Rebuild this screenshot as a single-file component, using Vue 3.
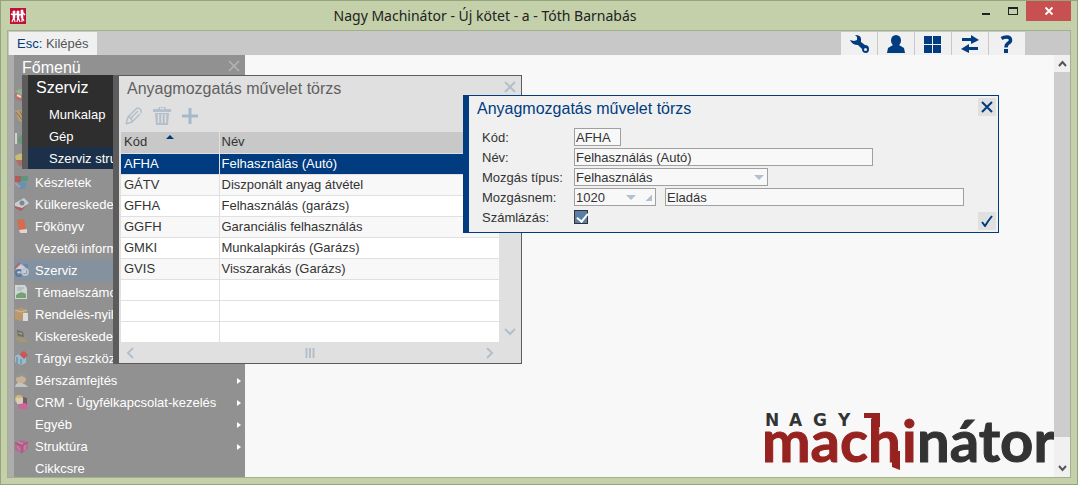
<template>
  <div class="app-window">
    <header class="titlebar">
      <svg class="app-icon" viewBox="0 0 16 16">
        <rect width="16" height="16" fill="#c01038" />
        <path d="M1 6l3 1 3-1 3 1 3-2 2 2" fill="none" stroke="#fff" stroke-width="1.500" />
        <path d="M4 5v5M8 5v5M12 4v6" stroke="#fff" stroke-width="2.500" />
        <path d="m4 9-2 5M4 9l1 5M8 9l-1 5M8 9l2 5M12 9v5M12 9l2 4" stroke="#fff" stroke-width="1.200" />
        <circle cx="4" cy="4" r="1.500" fill="#fff" />
        <circle cx="8" cy="4" r="1.500" fill="#fff" />
        <circle cx="12" cy="3" r="1.500" fill="#fff" />
      </svg>
      <h1 class="window-title">Nagy Machinátor - Új kötet - a - Tóth Barnabás</h1>
      <div class="window-controls">
        <button class="win-btn" aria-label="Kis méret">
          <svg width="10" height="12" viewBox="0 0 10 12"><path d="M1 8h8v2H1z" fill="#222" /></svg>
        </button>
        <button class="win-btn" aria-label="Teljes méret">
          <svg width="10" height="10" viewBox="0 0 10 10"><path d="M0 1h10v8H0zM1 3v5h8V3z" fill="#222" fill-rule="evenodd" /></svg>
        </button>
        <button class="win-btn win-close" aria-label="Bezárás">
          <svg width="10" height="10" viewBox="0 0 10 10"><path d="m1.500 1.500 7 7m0-7-7 7" stroke="#fff" stroke-width="1.800" /></svg>
        </button>
      </div>
    </header>

    <div class="client">
      <nav class="menubar">
        <button class="esc-btn"><span class="esc-key">Esc:</span> Kilépés</button>
        <div class="tools">
          <button v-for="tool in tools" :key="tool.name" class="tool-btn" :aria-label="tool.name">
            <svg width="22" height="20" viewBox="0 0 22 20" v-html="tool.svg"></svg>
          </button>
        </div>
      </nav>

      <main class="desktop">
        <!-- Főmenü -->
        <section class="main-menu">
          <div class="menu-head">
            <h2>Főmenü</h2>
            <button class="plain-btn" aria-label="Főmenü bezárása">
              <svg width="12" height="12" viewBox="0 0 12 12"><path d="m1 1 10 10m0-10L1 11" stroke="#b4b4b4" stroke-width="1.600" /></svg>
            </button>
          </div>
          <ul>
            <li v-for="(item, i) in menuItems" :key="i" :class="{ active: item.active }">
              <svg class="menu-icon" viewBox="0 0 15 16" v-html="item.icon"></svg>
              <span class="menu-label">{{ item.label }}</span>
              <span v-if="item.arrow" class="menu-arrow"></span>
            </li>
          </ul>
        </section>

        <!-- Szerviz almenü -->
        <section class="sub-menu">
          <h2>Szerviz</h2>
          <ul>
            <li>Munkalap</li>
            <li>Gép</li>
            <li class="active">Szerviz struktúra</li>
          </ul>
        </section>

        <!-- lista ablak -->
        <section class="list-window">
          <div class="list-head">
            <h2>Anyagmozgatás művelet törzs</h2>
            <button class="plain-btn" aria-label="Lista bezárása">
              <svg width="12" height="12" viewBox="0 0 12 12"><path d="m1 1 10 10m0-10L1 11" stroke="#b3bfca" stroke-width="2" /></svg>
            </button>
          </div>
          <div class="list-tools">
            <button class="plain-btn" aria-label="Módosítás">
              <svg width="20" height="20" viewBox="0 0 20 20"><path d="M2 18 4 11 13 2M7 17l9-9M2 18l6-2M6 13l8-8M4 11q4 0 4 5M13 2q5 0 4 5" fill="none" stroke="#b3bfca" stroke-width="1.500" /></svg>
            </button>
            <button class="plain-btn" aria-label="Törlés">
              <svg width="20" height="20" viewBox="0 0 20 20"><path d="M1 3h5l1-2h6l1 2h5v3H1zM3 7h14l-1 12H4z" fill="#b3bfca" /><path d="M8 2.500h4M6.500 8v9M10 8v9M13.500 8v9" stroke="#e0e0e0" stroke-width="1.500" /></svg>
            </button>
            <button class="plain-btn" aria-label="Új">
              <svg width="20" height="20" viewBox="0 0 20 20"><path d="M10 2v16M2 10h16" stroke="#a6b9cc" stroke-width="3" /></svg>
            </button>
          </div>
          <div class="list-body">
            <table>
              <thead>
                <tr>
                  <th class="col-code">Kód <span class="sort-mark"></span></th>
                  <th>Név</th>
                </tr>
              </thead>
              <tbody>
                <tr
                  v-for="(row, i) in rows"
                  :key="i"
                  :class="{ selected: i === selected, filled: row.code }"
                  @click="selected = i"
                >
                  <td>{{ row.code }}</td>
                  <td>{{ row.name }}</td>
                </tr>
              </tbody>
            </table>
            <div class="list-vscroll">
              <svg width="12" height="8" viewBox="0 0 12 8"><path d="m1 1 5 5 5-5" fill="none" stroke="#b3bfca" stroke-width="2" /></svg>
            </div>
          </div>
          <div class="list-hscroll">
            <svg width="8" height="12" viewBox="0 0 8 12"><path d="M7 1 2 6l5 5" fill="none" stroke="#b3bfca" stroke-width="2" /></svg>
            <svg width="10" height="10" viewBox="0 0 10 10"><path d="M1.500 0v10M5 0v10M8.500 0v10" stroke="#b3bfca" stroke-width="2" /></svg>
            <svg width="8" height="12" viewBox="0 0 8 12"><path d="m1 1 5 5-5 5" fill="none" stroke="#b3bfca" stroke-width="2" /></svg>
          </div>
        </section>

        <!-- adatlap -->
        <form class="dialog" @submit.prevent>
          <div class="dialog-main">
            <h2>Anyagmozgatás művelet törzs</h2>
            <div class="fields">
              <label for="code">Kód:</label>
              <div class="field"><input id="code" v-model="form.code" class="box w-code" type="text" /></div>
              <label for="name">Név:</label>
              <div class="field"><input id="name" v-model="form.name" class="box w-long" type="text" /></div>
              <label for="type">Mozgás típus:</label>
              <div class="field">
                <div class="box combo w-type">
                  <select id="type" v-model="form.type">
                    <option>Felhasználás</option>
                  </select>
                  <span class="down"></span>
                </div>
              </div>
              <label for="kind">Mozgásnem:</label>
              <div class="field">
                <div class="box combo w-kind">
                  <input id="kind" v-model="form.kind" type="text" />
                  <button type="button" class="down" aria-label="Lista"></button>
                  <button type="button" class="corner" aria-label="Keresés"></button>
                </div>
                <input v-model="form.kindName" class="box w-long" type="text" aria-label="Mozgásnem neve" />
              </div>
              <label for="bill">Számlázás:</label>
              <div class="field"><input id="bill" v-model="form.bill" class="tick" type="checkbox" /></div>
            </div>
          </div>
          <div class="dialog-side">
            <button type="button" class="dlg-btn" aria-label="Bezárás">
              <svg width="12" height="12" viewBox="0 0 12 12"><path d="m1 1 10 10m0-10L1 11" stroke="#003c7f" stroke-width="2" /></svg>
            </button>
            <button type="submit" class="dlg-btn" aria-label="Rendben">
              <svg width="12" height="12" viewBox="0 0 12 12"><path d="m1 7 3 4q3-5 7-10" fill="none" stroke="#003c7f" stroke-width="2" /></svg>
            </button>
          </div>
        </form>

        <svg class="logo" width="289" height="66" viewBox="0 0 289 66">
          <g class="logo-small">
            <text x="0" y="21">N</text>
            <text x="24" y="21">A</text>
            <text x="48" y="21">G</text>
            <text x="73" y="21">Y</text>
          </g>
          <g class="logo-big">
            <text x="-3" y="57" class="red">mac</text>
            <text x="103" y="57" class="red">h</text>
            <text x="137" y="57" class="red">i</text>
            <text x="152" y="57">nátor</text>
          </g>
          <path d="M99 8h16v14h-8v-9h-8zM127 46h8v19l-8-3z" fill="#96231f" />
        </svg>

        <div class="scrollbar">
          <button class="plain-btn" aria-label="Fel">
            <svg width="9" height="7" viewBox="0 0 9 7"><path d="m1 6 3.500-4L8 6" fill="none" stroke="#555" stroke-width="2" /></svg>
          </button>
          <div class="track"><div class="thumb"></div></div>
          <button class="plain-btn" aria-label="Le">
            <svg width="9" height="7" viewBox="0 0 9 7"><path d="m1 1 3.500 4L8 1" fill="none" stroke="#555" stroke-width="2" /></svg>
          </button>
        </div>
      </main>
    </div>
  </div>
</template>

<script setup>
import { reactive, ref } from 'vue'

const tools = [
  { name: 'Beállítások', svg: '<path d="M2 6l4 1 3-1V3L7 1q6 0 6 4v3l4 3q4 0 4 4t-3 4q-4 0-4-4l-4-4q-6 0-8-5z" fill="#003c7f"/><circle cx="17.500" cy="15.500" r="1.500" fill="#f0f0f0"/>' },
  { name: 'Felhasználó', svg: '<ellipse cx="11" cy="6.500" rx="5" ry="5.500" fill="#003c7f"/><path d="M8 11h6l5 3 1 5H2l1-5z" fill="#003c7f"/>' },
  { name: 'Ablakok', svg: '<path d="M2 2h8v8H2zM11 2h8v8h-8zM2 11h8v8H2zM11 11h8v8h-8z" fill="#003c7f"/>' },
  { name: 'Váltás', svg: '<path d="M3 4h9V1l8 5-8 4V7H3zM19 13h-9v-3l-8 5 8 4v-3h9z" fill="#003c7f"/>' },
  { name: 'Súgó', svg: '<path d="M5.500 4.500Q8 3 10.500 3q4 0 4 3 0 2-2 3-2.500 1.500-2.500 4.500" fill="none" stroke="#003c7f" stroke-width="3.500"/><path d="M8 15h4v4H8z" fill="#003c7f"/>' }
]

const icons = {
  berry: '<circle cx="7" cy="9" r="6" fill="#c06a58"/><path d="M1 6q5-6 11 0L7 9z" fill="#8fb98a"/><path d="M3 9l4 2" stroke="#eee" stroke-width="2"/>',
  shell: '<path d="M1 3q9-3 11 4l-1 7-6-1z" fill="#c9a268"/><path d="M2 4l7 9M6 3l4 9" stroke="#7d6a55"/>',
  plant: '<path d="M2 3v11" stroke="#e0e0e0" stroke-width="2"/><circle cx="9" cy="10" r="5" fill="#5f9a78"/>',
  food: '<path d="M1 4q6-5 12 0l-1 4H2z" fill="#d8c96c"/><path d="M2 8h10l-2 6H5z" fill="#b6655e"/>',
  stock: '<path d="M1 2h6v6H1z" fill="#bc5050"/><path d="M7 2h7v5H7z" fill="#4a9a80"/><path d="M3 8h10l-2 7H6z" fill="#6093b7"/><path d="M1 9l5 4" stroke="#b7a0ab" stroke-width="2"/>',
  ship: '<path d="m1 7 9-5 5 5-8 7-6-3z" fill="#d9dce0"/><path d="m1 10 7 2 6-4-7 7-6-3z" fill="#b65252"/><circle cx="8" cy="7" r="2.500" fill="#73879d"/>',
  book: '<path d="m3 2 7-1 2 11-7 1z" fill="#e8643f"/><path d="m5 12 8-1v4H6z" fill="#f2e8df"/>',
  service: '<path d="m2 6 5-4 5 4v5H3z" fill="#d7dde8"/><path d="m1 6 5-5" stroke="#c25a5a" stroke-width="2"/><circle cx="5" cy="11" r="3" fill="none" stroke="#526f9c" stroke-width="2"/><circle cx="11" cy="10" r="3" fill="none" stroke="#c4ceda" stroke-width="2"/><path d="M10 3h3v3" stroke="#5f83b3" stroke-width="2" fill="none"/>',
  sheet: '<path d="M1 1h10l2 3v11H1z" fill="#dfe9e6"/><path d="M2 11q5-5 10-1v4H2z" fill="#6fa56f"/><path d="M3 4h7M3 6h5" stroke="#9fb7c7"/>',
  box: '<path d="m1 4 6-2 6 2v9l-6 2-6-2z" fill="#c79a67"/><path d="m1 4 6 2 6-2" stroke="#e4c79d" fill="none"/><path d="M9 7h5v8H9z" fill="#eceef2"/>',
  till: '<path d="m3 2 6 2 1 5-6-1z" fill="#6e6351"/><path d="m1 9 9 1 4 4H4z" fill="#ab986f"/><path d="m4 4 4 1v2L5 6z" fill="#8fae8c"/>',
  assets: '<path d="m1 6 6-3 5 3v7l-5 2-6-3z" fill="#9cc7da"/><path d="m5 4 5-3 4 4-4 4z" fill="#d8494c"/><path d="M3 7v6M7 9v5" stroke="#4f7d9b"/>',
  payroll: '<circle cx="7" cy="7" r="5" fill="#d9b996"/><path d="M2 6q1-5 6-5t5 6L8 4z" fill="#8d9b92"/><path d="M1 15q1-5 6-4t7 4z" fill="#d0d3cc"/>',
  crm: '<circle cx="5" cy="5" r="4" fill="#e3c26b"/><path d="M2 4h9v6H3z" fill="#e9ddcb"/><path d="M9 3l4 1v7H9z" fill="#734e4f"/><path d="m5 10 7-1 2 6H4z" fill="#dd5c9f"/>',
  cube: '<path d="m1 5 6-3 7 2v7l-6 4-7-3z" fill="#c35f92"/><path d="m1 5 7 3 6-4M8 8v7" fill="none" stroke="#94496f"/><path d="M4 4l5 2M3 8l3 4M11 7v5" stroke="#e08fba"/>'
}

// az első négy sor feliratát az almenü takarja
const menuItems = [
  { label: '', icon: icons.berry },
  { label: '', icon: icons.shell },
  { label: '', icon: icons.plant },
  { label: '', icon: icons.food },
  { label: 'Készletek', icon: icons.stock },
  { label: 'Külkereskedelem', icon: icons.ship },
  { label: 'Főkönyv', icon: icons.book },
  { label: 'Vezetői információk', icon: '' },
  { label: 'Szerviz', icon: icons.service, active: true },
  { label: 'Témaelszámolás', icon: icons.sheet },
  { label: 'Rendelés-nyilvántartás', icon: icons.box },
  { label: 'Kiskereskedelem', icon: icons.till },
  { label: 'Tárgyi eszközök', icon: icons.assets },
  { label: 'Bérszámfejtés', icon: icons.payroll, arrow: true },
  { label: 'CRM - Ügyfélkapcsolat-kezelés', icon: icons.crm, arrow: true },
  { label: 'Egyéb', icon: '', arrow: true },
  { label: 'Struktúra', icon: icons.cube, arrow: true },
  { label: 'Cikkcsre', icon: '' }
]

const rows = [
  { code: 'AFHA', name: 'Felhasználás (Autó)' },
  { code: 'GÁTV', name: 'Diszponált anyag átvétel' },
  { code: 'GFHA', name: 'Felhasználás (garázs)' },
  { code: 'GGFH', name: 'Garanciális felhasználás' },
  { code: 'GMKI', name: 'Munkalapkirás (Garázs)' },
  { code: 'GVIS', name: 'Visszarakás (Garázs)' },
  {},
  {},
  {}
]

const selected = ref(0)

const form = reactive({
  code: 'AFHA',
  name: 'Felhasználás (Autó)',
  type: 'Felhasználás',
  kind: '1020',
  kindName: 'Eladás',
  bill: true
})
</script>

<style>
body {
  margin: 0;
}
</style>

<style scoped>
* {
  box-sizing: border-box;
}

.app-window {
  height: 100vh;
  display: flex;
  flex-direction: column;
  padding: 0 6px 6px;
  border: 1px solid #94a47c;
  background: #c3d0a9;
  font: 13px/20px "Liberation Sans", Arial, sans-serif;
  color: #333;
  overflow: hidden;
}

button,
input,
select {
  font: inherit;
  color: inherit;
  margin: 0;
  padding: 0;
  border: none;
  border-radius: 0;
  background: none;
}

h1,
h2,
ul {
  margin: 0;
  padding: 0;
  font-weight: normal;
  list-style: none;
}

h2 {
  font-size: 16px;
  line-height: 26px;
}

svg {
  display: block;
  flex: none;
}

.plain-btn {
  display: flex;
  align-items: center;
  justify-content: center;
}

/* title bar */
.titlebar {
  flex: none;
  height: 29px;
  display: flex;
  align-items: center;
}

.app-icon {
  width: 16px;
  height: 16px;
  margin-left: 3px;
}

.window-title {
  flex: 1;
  padding-right: 28px;
  font: 14px/28px "Noto Sans", "Open Sans", sans-serif;
  text-align: center;
  color: #222;
}

.window-controls {
  align-self: flex-start;
  display: flex;
}

.win-btn {
  width: 27px;
  height: 20px;
  display: flex;
  align-items: center;
  justify-content: center;
}

.win-close {
  width: 45px;
  background: #c75050;
}

/* client area */
.client {
  flex: 1;
  min-height: 0;
  display: flex;
  flex-direction: column;
  border: 1px solid #a3b08a;
  background: #f8f8f8;
}

.menubar {
  flex: none;
  height: 24px;
  display: flex;
  justify-content: space-between;
  padding: 1px 45px 0 1px;
  background: #c8c8c8;
}

.esc-btn {
  padding: 0 8px;
  background: #f0f0f0;
  color: #555;
}

.esc-key {
  color: #003c7f;
}

.tools {
  display: flex;
  gap: 1px;
}

.tool-btn {
  width: 36px;
  display: flex;
  align-items: center;
  justify-content: center;
  background: #f0f0f0;
}

.desktop {
  flex: 1;
  min-height: 0;
  position: relative;
  display: flex;
  overflow: hidden;
}

/* main menu */
.main-menu {
  width: 237px;
  border-left: 6px solid #adadad;
  background: #919191;
  color: #fff;
}

.menu-head {
  height: 28px;
  display: flex;
  justify-content: space-between;
  align-items: flex-start;
  padding: 0 5px 0 8px;
}

.menu-head .plain-btn {
  height: 22px;
}

.main-menu li {
  height: 22px;
  display: flex;
  align-items: center;
  padding: 2px 4px 0 0;
}

.main-menu li.active {
  background: #8492a0;
}

.menu-icon {
  width: 15px;
  height: 16px;
  margin: 0 6px 2px 0;
  opacity: 0.8;
}

.menu-label {
  flex: 1;
  white-space: nowrap;
}

.menu-arrow {
  border: 3px solid transparent;
  border-left: 4px solid #fff;
  border-right: none;
}

/* sub menu */
.sub-menu {
  position: absolute;
  left: 14px;
  top: 20px;
  width: 97px;
  border-left: 6px solid #5c5c5c;
  background: #2e2e2e;
  color: #fff;
  overflow: hidden;
}

.sub-menu h2 {
  height: 28px;
  padding-left: 8px;
}

.sub-menu li {
  height: 22px;
  padding-left: 21px;
  line-height: 24px;
  white-space: nowrap;
}

.sub-menu li.active {
  background: #1c304a;
}

/* list window */
.list-window {
  position: absolute;
  left: 105px;
  top: 20px;
  width: 409px;
  border: 1px solid #5c5c5c;
  border-left-width: 6px;
  background: #e0e0e0;
}

.list-head {
  height: 24px;
  display: flex;
  justify-content: space-between;
  align-items: flex-start;
  padding: 0 5px 0 8px;
  color: #606060;
}

.list-head .plain-btn {
  height: 22px;
}

.list-tools {
  height: 32px;
  display: flex;
  align-items: center;
  gap: 8px;
  padding: 0 0 0 5px;
}

.list-body {
  display: flex;
  padding-left: 2px;
}

table {
  flex: 1;
  table-layout: fixed;
  border-collapse: collapse;
}

th,
td {
  height: 21px;
  padding: 0 2px 0 3px;
  line-height: 20px;
  text-align: left;
  font-weight: normal;
  border-bottom: 1px solid #e0e0e0;
}

th + th,
td + td {
  padding-left: 2px;
  border-left: 1px solid #e0e0e0;
}

tbody tr:last-child td {
  border-bottom: none;
}

thead tr {
  background: #c8c8c8;
}

.col-code {
  width: 98px;
}

.sort-mark {
  display: inline-block;
  margin-left: 15px;
  vertical-align: 7px;
  border: 4px solid transparent;
  border-bottom-color: #003c7f;
  border-top: none;
}

tbody tr {
  background: #fff;
}

tbody tr.filled:nth-child(even) {
  background: #f8f8f8;
}

tbody tr.selected,
tbody tr.selected.filled {
  background: #003c7f;
  color: #fff;
}

.list-vscroll {
  width: 22px;
  display: flex;
  align-items: flex-end;
  justify-content: center;
  padding-bottom: 6px;
}

.list-hscroll {
  height: 21px;
  display: flex;
  align-items: center;
  justify-content: space-between;
  padding: 0 27px 0 7px;
}

/* dialog */
.dialog {
  position: absolute;
  left: 455px;
  top: 40px;
  width: 536px;
  display: flex;
  border: 1px solid #003c7f;
  border-left-width: 6px;
  background: #f0f0f0;
}

.dialog-main {
  flex: 1;
  padding-bottom: 5px;
}

.dialog h2 {
  height: 31px;
  padding-left: 8px;
  color: #003c7f;
}

.fields {
  display: grid;
  grid-template-columns: 92px 1fr;
  padding-left: 13px;
}

.fields label {
  height: 20px;
  line-height: 22px;
}

.field {
  height: 20px;
  display: flex;
  align-items: center;
  gap: 9px;
}

.box {
  height: 18px;
  padding: 0 1px;
  border: 1px solid #a0a0a0;
  background: #f8f8f8;
  line-height: 16px;
}

.combo {
  display: flex;
  align-items: center;
  padding-right: 3px;
}

.combo input,
.combo select {
  flex: 1;
  width: 0;
  height: 16px;
  padding-top: 1px;
  appearance: none;
  outline: none;
}

.w-code {
  width: 47px;
}

.w-long {
  width: 299px;
}

.w-type {
  width: 194px;
}

.w-kind {
  width: 82px;
}

.down {
  border: 5px solid transparent;
  border-top-color: #b3c0cd;
  border-bottom: none;
}

.corner {
  width: 7px;
  height: 7px;
  margin-left: 9px;
  background: linear-gradient(135deg, transparent 50%, #b3c0cd 50%);
}

.tick {
  width: 14px;
  height: 14px;
  appearance: none;
  border: 1px solid #333;
  background: #5b7ea6;
}

.tick:checked::after {
  content: "";
  display: block;
  width: 5px;
  height: 9px;
  margin-left: 4px;
  border: solid #fff;
  border-width: 0 2px 2px 0;
  transform: rotate(40deg);
}

.dialog-side {
  display: flex;
  flex-direction: column;
  justify-content: space-between;
  padding: 2px;
}

.dlg-btn {
  width: 18px;
  height: 18px;
  display: flex;
  align-items: center;
  justify-content: center;
  background: #e0e0e0;
}

/* logo */
.logo {
  align-self: flex-end;
  margin: 0 0 6px auto;
}

.logo-small {
  font: bold 17px "DejaVu Sans", sans-serif;
  fill: #333;
}

.logo-big {
  font: bold 58px Lato, sans-serif;
  fill: #333;
  stroke: #333;
  stroke-width: 1px;
}

.logo .red {
  fill: #96231f;
  stroke: #96231f;
}

/* scroll bar */
.scrollbar {
  width: 16px;
  display: flex;
  flex-direction: column;
  background: #f0f0f0;
}

.scrollbar .plain-btn {
  height: 17px;
}

.track {
  flex: 1;
}

.thumb {
  height: 94%;
  background: #cdcdcd;
}
</style>
